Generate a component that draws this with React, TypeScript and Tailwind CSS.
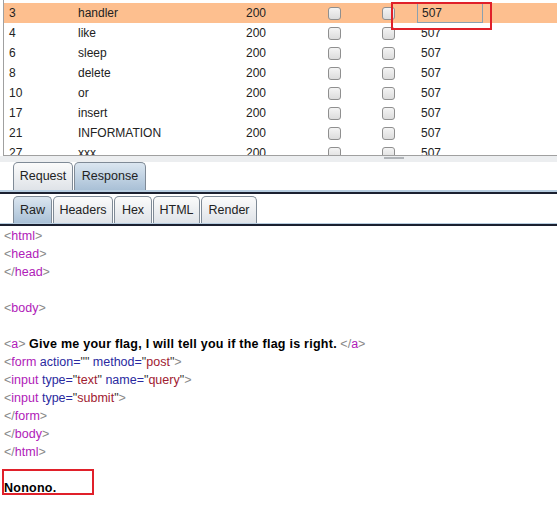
import React from 'react';

const rows = [
  ['3', 'handler'],
  ['4', 'like'],
  ['6', 'sleep'],
  ['8', 'delete'],
  ['10', 'or'],
  ['17', 'insert'],
  ['21', 'INFORMATION'],
  ['27', 'xxx'],
];

function Box() {
  return <span className="block w-[13px] h-[13px] rounded-[3px] border border-[#8f8f8f] bg-gradient-to-b from-[#f4f4f4] to-[#dcdcdc]" />;
}

function Tab({ label, active, w }: { label: string; active?: boolean; w: string }) {
  return (
    <div
      className={`${w} h-full flex items-center justify-center rounded-t-[5px] border border-b-0 border-[#7f8a96] ${
        active ? 'bg-gradient-to-b from-[#dbe6f0] to-[#a9c0d6]' : 'bg-gradient-to-b from-[#fbfbfb] to-[#dfe3e8]'
      }`}
    >
      {label}
    </div>
  );
}

const Lt = () => <span className="text-[#888]">&lt;</span>;
const Gt = () => <span className="text-[#888]">&gt;</span>;
const T = ({ n, close }: { n: string; close?: boolean }) => (
  <>
    <Lt />
    {close && <span className="text-[#888]">/</span>}
    <span className="text-[#b020b8]">{n}</span>
    <Gt />
  </>
);
const A = ({ n }: { n: string }) => <span className="text-[#2a2aa0]"> {n}=</span>;
const V = ({ v }: { v: string }) => (
  <>
    <span className="text-[#333]">"</span>
    <span className="text-[#a02030]">{v}</span>
    <span className="text-[#333]">"</span>
  </>
);

export default function App() {
  return (
    <div className="w-[557px] h-[507px] bg-white overflow-hidden text-[12px] text-[#222]" style={{ fontFamily: '"Liberation Sans", Arial, sans-serif' }}>
      <div className="relative h-[156px] ml-[3px] pt-[3px] border-l border-b border-[#a0a0a0] overflow-hidden">
        {rows.map(([id, p], i) => (
          <div key={id} className={`flex items-center h-[20px] ${i === 0 ? 'bg-[#fdbf8f]' : ''}`}>
            <span className="w-[74px] pl-[5px]">{id}</span>
            <span className="w-[168px]">{p}</span>
            <span className="w-[82px]">200</span>
            <span className="w-[54px]"><Box /></span>
            <span className="w-[35px]"><Box /></span>
            <span className={`w-[66px] h-full flex items-center pl-[4px] ${i === 0 ? 'border border-[#8aa0b0]' : ''}`}>507</span>
          </div>
        ))}
        <div className="absolute left-[387px] top-[2px] w-[101px] h-[28px] border-2 border-[#e0202a]" />
      </div>
      <div className="h-[6px] bg-[#eceef0] flex justify-center pl-[230px]">
        <span className="mt-[1px] w-[20px] h-[2px] bg-[#b0b4b8]" />
      </div>

      <div className="h-[28px] pl-[13px] flex items-end gap-[1px] text-[12.5px]">
        <Tab label="Request" w="w-[60px]" />
        <Tab label="Response" w="w-[72px]" active />
      </div>
      <div className="h-[2px] bg-[#b7cde0]" />
      <div className="h-[2px] bg-[#1b2030]" />
      <div className="h-[2px]" />
      <div className="h-[27px] pl-[13px] flex items-end gap-[1px] text-[12.5px]">
        <Tab label="Raw" w="w-[39px]" active />
        <Tab label="Headers" w="w-[60px]" />
        <Tab label="Hex" w="w-[38px]" />
        <Tab label="HTML" w="w-[47px]" />
        <Tab label="Render" w="w-[56px]" />
      </div>
      <div className="h-[1px] bg-[#b7cde0]" />
      <div className="h-[2px] bg-[#1b2030]" />

      <div className="pl-[4px] pt-[1px] leading-[18px] text-[12.5px]">
        <div><T n="html" /></div>
        <div><T n="head" /></div>
        <div><T n="head" close /></div>
        <div className="h-[18px]" />
        <div><T n="body" /></div>
        <div className="h-[18px]" />
        <div>
          <T n="a" /> <b className="text-black tracking-[0.25px]">Give me your flag, I will tell you if the flag is right.</b> <T n="a" close />
        </div>
        <div>
          <Lt /><span className="text-[#b020b8]">form</span><A n="action" /><V v="" /><A n="method" /><V v="post" /><Gt />
        </div>
        <div>
          <Lt /><span className="text-[#b020b8]">input</span><A n="type" /><V v="text" /><A n="name" /><V v="query" /><Gt />
        </div>
        <div>
          <Lt /><span className="text-[#b020b8]">input</span><A n="type" /><V v="submit" /><Gt />
        </div>
        <div><T n="form" close /></div>
        <div><T n="body" close /></div>
        <div><T n="html" close /></div>
        <div className="relative mt-[8px] h-[22px] -ml-[2px]">
          <div className="absolute left-0 top-0 w-[92px] h-[26px] border-2 border-[#e0202a]" />
          <b className="absolute left-[2px] top-[12px] text-black leading-[14px] tracking-[0.25px]">Nonono.</b>
        </div>
      </div>
    </div>
  );
}
